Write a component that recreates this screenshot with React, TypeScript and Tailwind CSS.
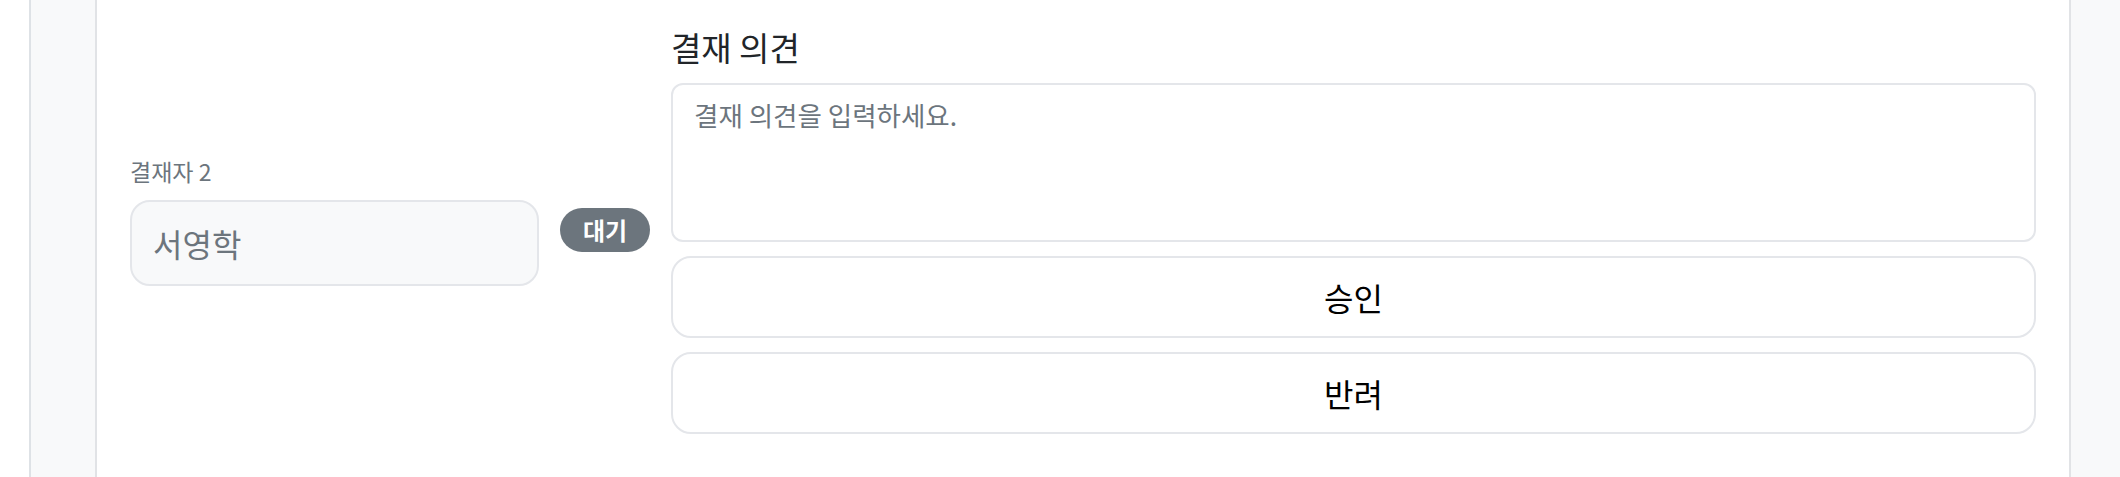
import React from "react";

export default function App() {
  const font = { fontFamily: '"Noto Sans CJK KR", "Noto Sans", sans-serif' };
  return (
    <div className="w-[2120px] h-[477px] flex bg-white overflow-hidden" style={font}>
      <div className="w-[29px] shrink-0 bg-white" />
      <div className="flex-1 flex border-l-2 border-[#dee2e6] bg-[#f8f9fa] pl-[64px] pr-[49px]">
        <div className="flex-1 bg-white border-x-2 border-[#e1e3e6] px-[33px] pt-[26px]">
          <div className="flex items-center gap-[21px]">
            <div className="w-[409px] shrink-0 pb-[18px]">
              <div className="text-[23px] leading-[30px] text-[#6c757d] mb-[14px]">결재자 2</div>
              <div className="h-[86px] rounded-[20px] border-2 border-[#e4e6ea] bg-[#f8f9fa] px-[21px] flex items-center text-[32px] text-[#6c757d]">
                서영학
              </div>
            </div>
            <span className="w-[90px] h-[44px] shrink-0 rounded-full bg-[#6c757d] text-white font-bold text-[24px] flex items-center justify-center">
              대기
            </span>
            <div className="flex-1 flex flex-col">
              <div className="text-[33px] leading-[42px] text-[#212529] mb-[15px]">결재 의견</div>
              <textarea
                className="h-[159px] resize-none rounded-[12px] border-2 border-[#e4e6ea] bg-white px-[21px] pt-[12px] pb-[10px] text-[26.5px] leading-[36px] text-[#212529] placeholder:text-[#6c757d] outline-none"
                placeholder="결재 의견을 입력하세요."
                style={font}
              />
              <button className="mt-[14px] h-[82px] rounded-[20px] border-2 border-[#e4e6ea] bg-white text-[32px] text-black" style={font}>
                승인
              </button>
              <button className="mt-[14px] h-[82px] rounded-[20px] border-2 border-[#e4e6ea] bg-white text-[32px] text-black" style={font}>
                반려
              </button>
            </div>
          </div>
        </div>
      </div>
    </div>
  );
}
